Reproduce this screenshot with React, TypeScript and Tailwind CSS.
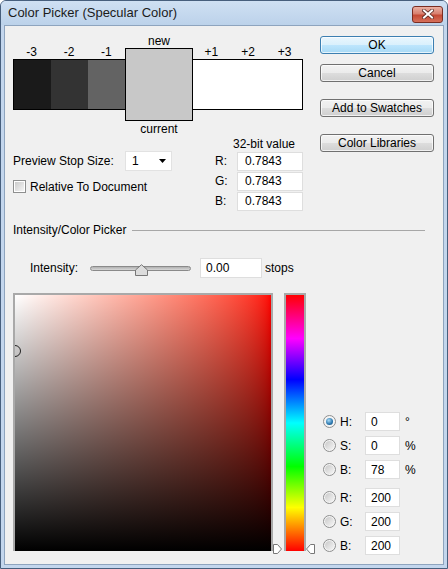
import React from 'react';

const Btn: React.FC<{ label: string; primary?: boolean; className?: string }> = ({ label, primary, className }) => (
  <div
    className={`h-[18px] w-[114px] rounded-[3px] border flex items-center justify-center leading-none shadow-[inset_0_0_0_1px_rgba(255,255,255,0.7)] ${
      primary
        ? 'border-[#3c7fb1] bg-[linear-gradient(to_bottom,#eaf6fd_0%,#d9f0fc_50%,#bee6fd_50%,#a7d9f5_100%)]'
        : 'border-[#707070] bg-[linear-gradient(to_bottom,#f2f2f2_0%,#ebebeb_50%,#dddddd_50%,#cfcfcf_100%)]'
    } ${className ?? ''}`}
  >
    {label}
  </div>
);

const Radio: React.FC<{ checked?: boolean }> = ({ checked }) => (
  <div className="w-[13px] h-[13px] rounded-full border border-[#8e8f8f] bg-[#f4f4f4] flex items-center justify-center shrink-0">
    {checked ? (
      <div className="w-[7px] h-[7px] rounded-full bg-[radial-gradient(circle_at_40%_35%,#a9dcf8,#2a76ad_60%,#164a73)]" />
    ) : (
      <div className="w-[9px] h-[9px] rounded-full bg-linear-to-br from-[#c9c9c9] to-[#f6f6f6]" />
    )}
  </div>
);

const Box: React.FC<{ value: string; className: string }> = ({ value, className }) => (
  <div className={`h-[19px] bg-white border border-[#dedede] flex items-center leading-none ${className}`}>{value}</div>
);

const ValueRow: React.FC<{ label: string; value: string; unit?: string; checked?: boolean; className?: string }> = ({
  label,
  value,
  unit,
  checked,
  className,
}) => (
  <div className={`flex items-center h-[19px] ${className ?? ''}`}>
    <Radio checked={checked} />
    <span className="w-[29px] pl-[4px]">{label}</span>
    <Box value={value} className="w-[35px] pl-[5px]" />
    {unit && <span className="ml-[5px]">{unit}</span>}
  </div>
);

export default function App() {
  return (
    <div className="w-[448px] h-[569px] bg-[#c3d6ed] border border-[#475f7d] rounded-t-[6px] flex flex-col overflow-hidden text-[12px] text-black font-['Liberation_Sans',Arial,sans-serif]">
      {/* title bar */}
      <div className="h-[24px] flex items-center justify-between pl-[7px] pr-[4px] bg-linear-to-b from-[#cfe0f3] to-[#bcd2ea]">
        <span className="text-[13px] text-[#1b1b1b]">Color Picker (Specular Color)</span>
        <div className="w-[31px] h-[17px] mt-[2px] rounded-[3px] border border-[#7a2d22] bg-[linear-gradient(to_bottom,#eab0a3_0%,#d8806f_45%,#c54a35_55%,#d6705a_100%)] flex items-center justify-center">
          <svg width="12" height="10" viewBox="0 0 12 10">
            <path d="M2 1.5 L10 8.5 M10 1.5 L2 8.5" stroke="#5a2a22" strokeWidth="3.6" strokeLinecap="square" />
            <path d="M2 1.5 L10 8.5 M10 1.5 L2 8.5" stroke="#ffffff" strokeWidth="2" strokeLinecap="square" />
          </svg>
        </div>
      </div>

      {/* client area */}
      <div className="flex-1 mx-[3px] mb-[3px] border border-[#8ea4be] bg-[#f0f0f0] flex flex-col">
        {/* top section */}
        <div className="flex pl-[8px] pt-[8px]">
          <div className="w-[290px] flex flex-col">
            <div className="flex items-start">
              <div className="w-[112px] mt-[12px]">
                <div className="grid grid-cols-3 h-[13px] leading-[13px] text-center">
                  <span>-3</span>
                  <span>-2</span>
                  <span>-1</span>
                </div>
                <div className="h-[51px] border-y border-l border-black flex">
                  <div className="flex-1 bg-[#1a1a1a]" />
                  <div className="flex-1 bg-[#333333]" />
                  <div className="flex-1 bg-[#636363]" />
                </div>
              </div>
              <div className="w-[68px] flex flex-col">
                <div className="h-[14px] leading-[14px] text-center">new</div>
                <div className="h-[73px] border border-black bg-[#c8c8c8]" />
                <div className="h-[16px] leading-[16px] text-center">current</div>
              </div>
              <div className="w-[110px] mt-[12px]">
                <div className="grid grid-cols-3 h-[13px] leading-[13px] text-center">
                  <span>+1</span>
                  <span>+2</span>
                  <span>+3</span>
                </div>
                <div className="h-[51px] border-y border-r border-black bg-white" />
              </div>
            </div>

            <div className="flex">
              <div className="w-[202px] pt-[14px]">
                <div className="flex items-center h-[20px]">
                  <span className="w-[112px]">Preview Stop Size:</span>
                  <div className="w-[47px] h-[20px] bg-white border border-[#e2e2e2] flex items-center justify-between pl-[6px] pr-[5px]">
                    <span>1</span>
                    <svg width="7" height="4" viewBox="0 0 7 4">
                      <path d="M0 0 H7 L3.5 4 Z" fill="#000" />
                    </svg>
                  </div>
                </div>
                <div className="flex items-center h-[13px] mt-[9px]">
                  <div className="w-[13px] h-[13px] border border-[#8e8f8f] bg-white flex items-center justify-center">
                    <div className="w-[9px] h-[9px] bg-linear-to-br from-[#cbcbcb] to-[#f5f5f5]" />
                  </div>
                  <span className="ml-[4px]">Relative To Document</span>
                </div>
              </div>
              <div className="w-[88px]">
                <div className="h-[14px] leading-[14px] pl-[18px]">32-bit value</div>
                {['R:', 'G:', 'B:'].map((l) => (
                  <div key={l} className="flex items-center h-[20px]">
                    <span className="w-[22px]">{l}</span>
                    <Box value="0.7843" className="w-[66px] pl-[7px]" />
                  </div>
                ))}
              </div>
            </div>
          </div>

          <div className="ml-[17px] mt-[2px] flex flex-col">
            <Btn label="OK" primary />
            <Btn label="Cancel" className="mt-[10px]" />
            <Btn label="Add to Swatches" className="mt-[17px]" />
            <Btn label="Color Libraries" className="mt-[17px]" />
          </div>
        </div>

        {/* group header */}
        <div className="flex items-center h-[14px] mt-[12px] pl-[8px] pr-[18px]">
          <span>Intensity/Color Picker</span>
          <div className="flex-1 h-px bg-[#a7a7a7] ml-[6px]" />
        </div>

        {/* intensity */}
        <div className="flex items-center h-[20px] mt-[21px] pl-[25px]">
          <span className="w-[60px]">Intensity:</span>
          <div className="relative w-[101px] h-[20px] flex items-center">
            <div className="w-full h-[5px] rounded-full border border-[#8a8a8a] bg-linear-to-b from-[#b0b0b0] to-[#d8d8d8]" />
            <svg className="absolute left-[45px] top-[6px]" width="13" height="12" viewBox="0 0 13 12">
              <path d="M0.5 11.5 V6 L6.5 0.7 L12.5 6 V11.5 Z" fill="#dcdcdc" stroke="#777" strokeLinejoin="round" />
            </svg>
          </div>
          <Box value="0.00" className="w-[62px] h-[20px] ml-[9px] pl-[5px]" />
          <span className="ml-[3px]">stops</span>
        </div>

        {/* picker */}
        <div className="flex items-start mt-[15px] pl-[8px]">
          <div className="relative border-2 border-b-0 border-[#a9a9a9]">
            <div className="relative w-[256px] h-[256px] overflow-hidden bg-linear-to-r from-white to-[#ff0000]">
              <div className="absolute inset-0 bg-linear-to-b from-transparent to-black" />
              <div className="absolute left-[-6px] top-[50px] w-[12px] h-[12px] rounded-full border border-[#222]" />
            </div>
            <svg className="absolute left-[258px] top-[249px]" width="10" height="10" viewBox="0 0 10 10">
              <path d="M0.5 0.5 H4.5 L8.5 5 L4.5 9.5 H0.5 Z" fill="#fff" stroke="#777" strokeLinejoin="round" />
            </svg>
          </div>

          <div className="relative ml-[11px] border-2 border-b-0 border-[#a9a9a9]">
            <div className="w-[18px] h-[256px] bg-[linear-gradient(to_bottom,#ff0000_0%,#ff00ff_17%,#0000ff_33%,#00ffff_50%,#00ff00_67%,#ffff00_83%,#ff0000_100%)]" />
            <svg className="absolute left-[19px] top-[249px]" width="10" height="10" viewBox="0 0 10 10">
              <path d="M9.5 0.5 H5.5 L1.5 5 L5.5 9.5 H9.5 Z" fill="#fff" stroke="#777" strokeLinejoin="round" />
            </svg>
          </div>

          <div className="ml-[17px] mt-[119px] flex flex-col">
            <ValueRow label="H:" value="0" unit="°" checked />
            <ValueRow label="S:" value="0" unit="%" className="mt-[5px]" />
            <ValueRow label="B:" value="78" unit="%" className="mt-[5px]" />
            <ValueRow label="R:" value="200" className="mt-[9px]" />
            <ValueRow label="G:" value="200" className="mt-[5px]" />
            <ValueRow label="B:" value="200" className="mt-[5px]" />
          </div>
        </div>
      </div>
    </div>
  );
}
